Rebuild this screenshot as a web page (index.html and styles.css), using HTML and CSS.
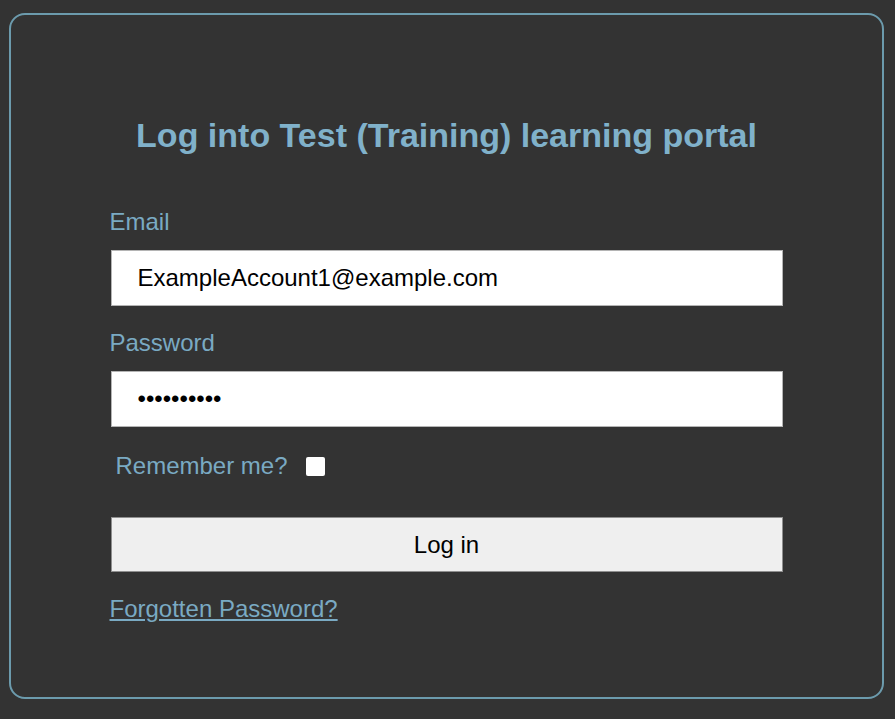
FILE: index.html
```html
<!DOCTYPE html>
<html lang="en">
<head>
    <meta charset="UTF-8">
    <meta name="viewport" content="width=device-width, initial-scale=1.0">
    <title>Log in</title>
    <link rel="stylesheet" href="styles.css">
</head>
<body>
    <main class="login-box">
        <h1>Log into Test (Training) learning portal</h1>

        <form class="login-form">
            <label class="field-label" for="email">Email</label>
            <input type="email" name="email" id="email" class="field email" value="ExampleAccount1@example.com">

            <label class="field-label" for="password">Password</label>
            <input type="password" name="password" id="password" class="field" value="secretpass">

            <label class="remember">Remember me? <input type="checkbox" name="remember"></label>

            <input type="submit" value="Log in" class="send">

            <a href="#" class="forgot">Forgotten Password?</a>
        </form>
    </main>
</body>
</html>
```

FILE: styles.css
```css
* {
    box-sizing: border-box;
    margin: 0;
    padding: 0;
}

body {
    min-height: 100vh;
    background-color: #333333;
    font-family: 'Liberation Sans', Arial, sans-serif;
}

.login-box {
    width: 875px;
    height: 686px;
    margin: 13px 0 0 9px;
    padding-top: 100px;
    border: 2px solid #6c9bad;
    border-radius: 16px;
}

.login-box h1 {
    font-size: 34px;
    line-height: 40px;
    text-align: center;
    color: #80b1ca;
    margin-bottom: 53px;
}

.login-form {
    width: 672px;
    margin: 0 auto;
}

.field-label {
    display: block;
    margin-left: -1px;
    margin-bottom: 14px;
    font-size: 24px;
    line-height: 28px;
    color: #7aaac3;
}

.field {
    display: block;
    width: 100%;
    height: 56px;
    padding: 0 26px;
    border: 1px solid #b4b4b4;
    background-color: white;
    font-family: inherit;
    font-size: 24px;
    color: black;
    outline: none;
}

.email {
    margin-bottom: 23px;
}

.remember {
    display: flex;
    align-items: center;
    gap: 18px;
    margin: 25px 0 37px 5px;
    font-size: 24px;
    line-height: 28px;
    color: #7aaac3;
}

.remember input {
    appearance: none;
    width: 19px;
    height: 19px;
    border-radius: 2px;
    background-color: white;
}

.send {
    display: block;
    width: 100%;
    height: 55px;
    margin-bottom: 23px;
    border: 1px solid #8f8f8f;
    background-color: #efefef;
    font-family: inherit;
    font-size: 24px;
    color: black;
}

.forgot {
    display: inline-block;
    margin-left: -1px;
    font-size: 24px;
    line-height: 28px;
    color: #7aaac3;
}
```
